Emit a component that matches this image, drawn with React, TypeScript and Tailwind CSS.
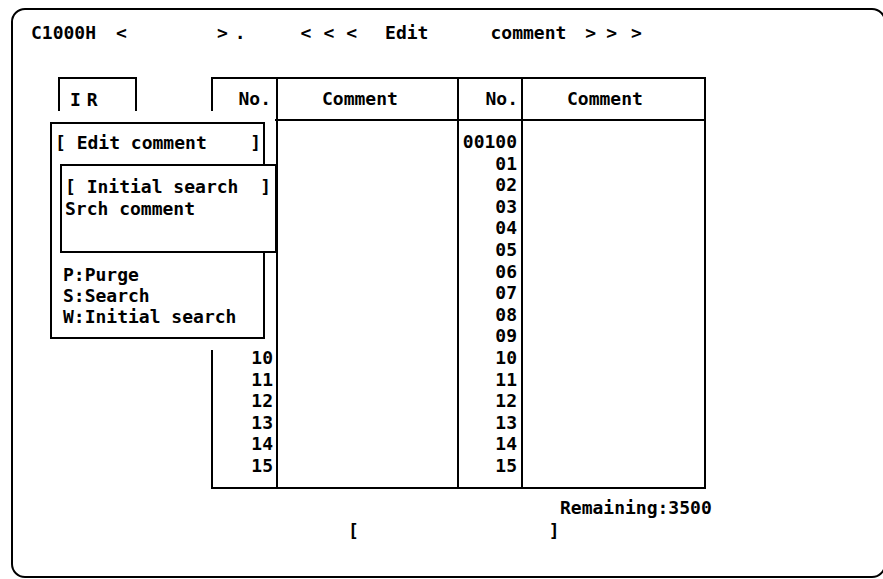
import React from "react";

const leftNums = ["", "", "", "", "", "", "", "", "", "", "10", "11", "12", "13", "14", "15"];
const rightNums = ["00100", "01", "02", "03", "04", "05", "06", "07", "08", "09", "10", "11", "12", "13", "14", "15"];

export default function App() {
  return (
    <div className="relative w-[883px] h-[579px] overflow-hidden bg-white text-black font-['DejaVu_Sans_Mono',monospace] font-bold text-[18px] leading-[22px] pt-[8px] pl-[11px]">
      <div className="w-[875px] h-[570px] rounded-[14px] border-2 border-black">
        {/* title line */}
        <div className="flex whitespace-pre pt-[12px] pl-[18px]">
          <span>C1000H</span>
          <span className="ml-[20px]">&lt;</span>
          <span className="ml-[90px]">&gt;</span>
          <span className="ml-[7px]">.</span>
          <span className="ml-[55px]">&lt;</span>
          <span className="ml-[12px]">&lt;</span>
          <span className="ml-[12px]">&lt;</span>
          <span className="ml-[28px]">Edit</span>
          <span className="ml-[62px]">comment</span>
          <span className="ml-[19px]">&gt;</span>
          <span className="ml-[10px]">&gt;</span>
          <span className="ml-[14px]">&gt;</span>
        </div>

        {/* main row */}
        <div className="flex items-start mt-[33px]">
          <div className="ml-[45px] w-[79px] h-[44px] border-2 border-b-0 border-black pt-[10px] pl-[10px] flex">
            <span>I</span>
            <span className="ml-[6px]">R</span>
          </div>

          <div className="ml-[74px] w-[495px] border-2 border-black">
            <div className="flex h-[42px] border-b-2 border-black">
              <div className="w-[65px] border-r-2 border-black flex items-center justify-end pr-[5px]">No.</div>
              <div className="w-[181px] border-r-2 border-black flex items-center pl-[44px]">Comment</div>
              <div className="w-[64px] border-r-2 border-black flex items-center justify-end pr-[3px]">No.</div>
              <div className="flex-1 flex items-center pl-[44px]">Comment</div>
            </div>
            <div className="flex h-[366px]">
              <div className="w-[65px] border-r-2 border-black pt-[10px] pr-[3px] text-right leading-[21.6px]">
                {leftNums.map((n, i) => (
                  <div key={i} className="h-[21.6px]">{n}</div>
                ))}
              </div>
              <div className="w-[181px] border-r-2 border-black" />
              <div className="w-[64px] border-r-2 border-black pt-[10px] pr-[4px] text-right leading-[21.6px]">
                {rightNums.map((n, i) => (
                  <div key={i} className="h-[21.6px]">{n}</div>
                ))}
              </div>
              <div className="flex-1" />
            </div>
          </div>
        </div>

        {/* footer */}
        <div className="mt-[8px] pl-[547px] whitespace-pre">Remaining:3500</div>
        <div className="mt-[1px] flex">
          <span className="ml-[335px]">[</span>
          <span className="ml-[190px]">]</span>
        </div>
      </div>

      {/* popup menu */}
      <div className="absolute left-[40px] top-[111px] bg-white pt-[11px] pr-[10px] pb-[11px] pl-[10px]">
        <div className="w-[215px] h-[217px] border-2 border-black">
          <div className="flex justify-between whitespace-pre pt-[8px] pl-[3px] pr-[2px]">
            <span>[ Edit comment</span>
            <span>]</span>
          </div>
          <div className="mt-[10px] ml-[8px] mr-[-14px] h-[89px] border-2 border-black bg-white pt-[10px] pl-[3px] pr-[4px]">
            <div className="flex justify-between whitespace-pre">
              <span>[ Initial search</span>
              <span>]</span>
            </div>
            <div className="whitespace-pre">Srch comment</div>
          </div>
          <div className="mt-[11px] pl-[11px] leading-[21px] whitespace-pre">
            <div>P:Purge</div>
            <div>S:Search</div>
            <div>W:Initial search</div>
          </div>
        </div>
      </div>
    </div>
  );
}
